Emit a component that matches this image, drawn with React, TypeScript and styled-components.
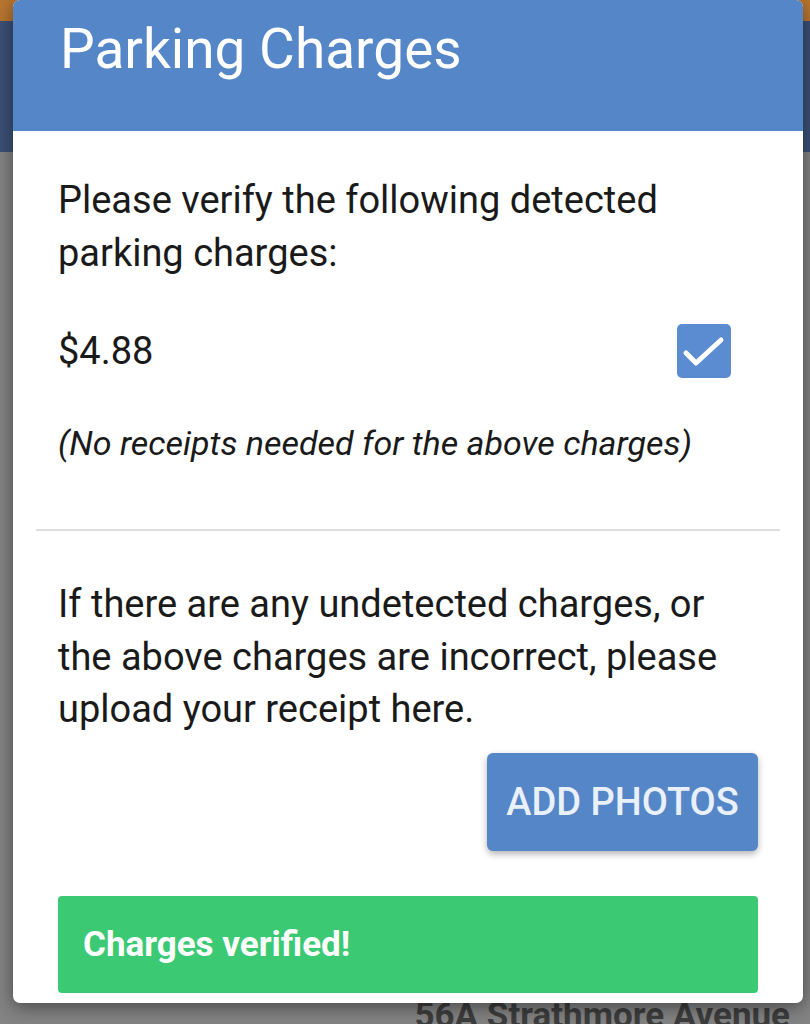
import styled, { createGlobalStyle } from "styled-components";

const GlobalStyle = createGlobalStyle`
  html, body {
    margin: 0;
    padding: 0;
  }
  body {
    font-family: Roboto, "Liberation Sans", Arial, sans-serif;
    -webkit-font-smoothing: antialiased;
  }
  * {
    box-sizing: border-box;
  }
`;

// --- the app page underneath the dialog (already dimmed)

const Screen = styled.div`
  position: relative;
  width: 810px;
  height: 1024px;
  overflow: hidden;
`;

const Backdrop = styled.div`
  display: flex;
  flex-direction: column;
  height: 100%;
`;

const StatusStrip = styled.div`
  height: 21px;
  background-color: #b8762f;
`;

const AppBar = styled.div`
  height: 131px;
  background-color: #3c5076;
`;

const PageContent = styled.div`
  flex: 1;
  display: flex;
  align-items: flex-end;
  justify-content: flex-end;
  padding-right: 20px;
  background-color: #838383;
`;

// partly hidden by the dialog and the bottom edge, as in the capture
const Address = styled.div`
  margin-bottom: -9px;
  font-size: 35px;
  line-height: 1;
  font-weight: 700;
  color: #3d3d3d;
`;

// --- dialog

const Dialog = styled.div`
  position: absolute;
  top: 0;
  left: 13px;
  width: 790px;
  background-color: #fff;
  border-radius: 7px;
  overflow: hidden;
  box-shadow: 0 4px 18px rgba(0, 0, 0, 0.45);
`;

const Header = styled.header`
  height: 131px;
  padding: 22px 47px 0;
  background-color: #5586c7;
`;

const Title = styled.h1`
  margin: 0;
  font-size: 55px;
  line-height: 1;
  font-weight: 400;
  color: #fff;
`;

const Body = styled.div`
  padding: 43px 23px 10px;
  color: #1a1a1a;
`;

const Section = styled.section`
  padding: 0 22px;
`;

const Text = styled.p<{ gap?: number }>`
  margin: ${props => props.gap || 0}px 0 0;
  font-size: 38px;
  line-height: 52.5px;
`;

const ChargeRow = styled.div`
  display: flex;
  align-items: center;
  justify-content: space-between;
  margin-top: 45px;
`;

const Amount = styled.span`
  font-size: 38px;
  line-height: 52px;
`;

const CheckBox = styled.span`
  display: flex;
  align-items: center;
  justify-content: center;
  width: 54px;
  height: 54px;
  margin-right: 27px;
  border-radius: 5px;
  background-color: #5b8bd0;
`;

const Note = styled.p`
  margin: 43px 0 0;
  font-size: 34px;
  line-height: 45px;
  font-style: italic;
`;

const Divider = styled.hr`
  margin: 63px 0 0;
  height: 2px;
  border: 0;
  background-color: #dedede;
`;

const Actions = styled.div`
  display: flex;
  justify-content: flex-end;
  margin-top: 17px;
`;

const Button = styled.button`
  width: 271px;
  height: 98px;
  padding: 0;
  border: 0;
  border-radius: 6px;
  background-color: #5586c7;
  color: #e9f0fa;
  font-family: inherit;
  font-size: 38px;
  font-weight: 500;
  box-shadow: 0 3px 7px rgba(0, 0, 0, 0.3);
`;

const Banner = styled.div`
  display: flex;
  align-items: center;
  height: 97px;
  margin-top: 45px;
  padding-left: 25px;
  border-radius: 4px;
  background-color: #3bc974;
  color: #fff;
  font-size: 35px;
  font-weight: 700;
`;

function App() {
  return (
    <Screen>
      <GlobalStyle />
      <Backdrop>
        <StatusStrip />
        <AppBar />
        <PageContent>
          <Address>56A Strathmore Avenue</Address>
        </PageContent>
      </Backdrop>
      <Dialog>
        <Header>
          <Title>Parking Charges</Title>
        </Header>
        <Body>
          <Section>
            <Text>Please verify the following detected parking charges:</Text>
            <ChargeRow>
              <Amount>$4.88</Amount>
              <CheckBox>
                <svg width="54" height="54" viewBox="0 0 54 54">
                  <path
                    d="M9 29 L19 39 L44 16"
                    fill="none"
                    stroke="#fff"
                    strokeWidth="5"
                    strokeLinecap="round"
                    strokeLinejoin="round"
                  />
                </svg>
              </CheckBox>
            </ChargeRow>
            <Note>(No receipts needed for the above charges)</Note>
          </Section>
          <Divider />
          <Section>
            <Text gap={47}>
              If there are any undetected charges, or the above charges are
              incorrect, please upload your receipt here.
            </Text>
            <Actions>
              <Button>ADD PHOTOS</Button>
            </Actions>
            <Banner>Charges verified!</Banner>
          </Section>
        </Body>
      </Dialog>
    </Screen>
  );
}

export default App;
